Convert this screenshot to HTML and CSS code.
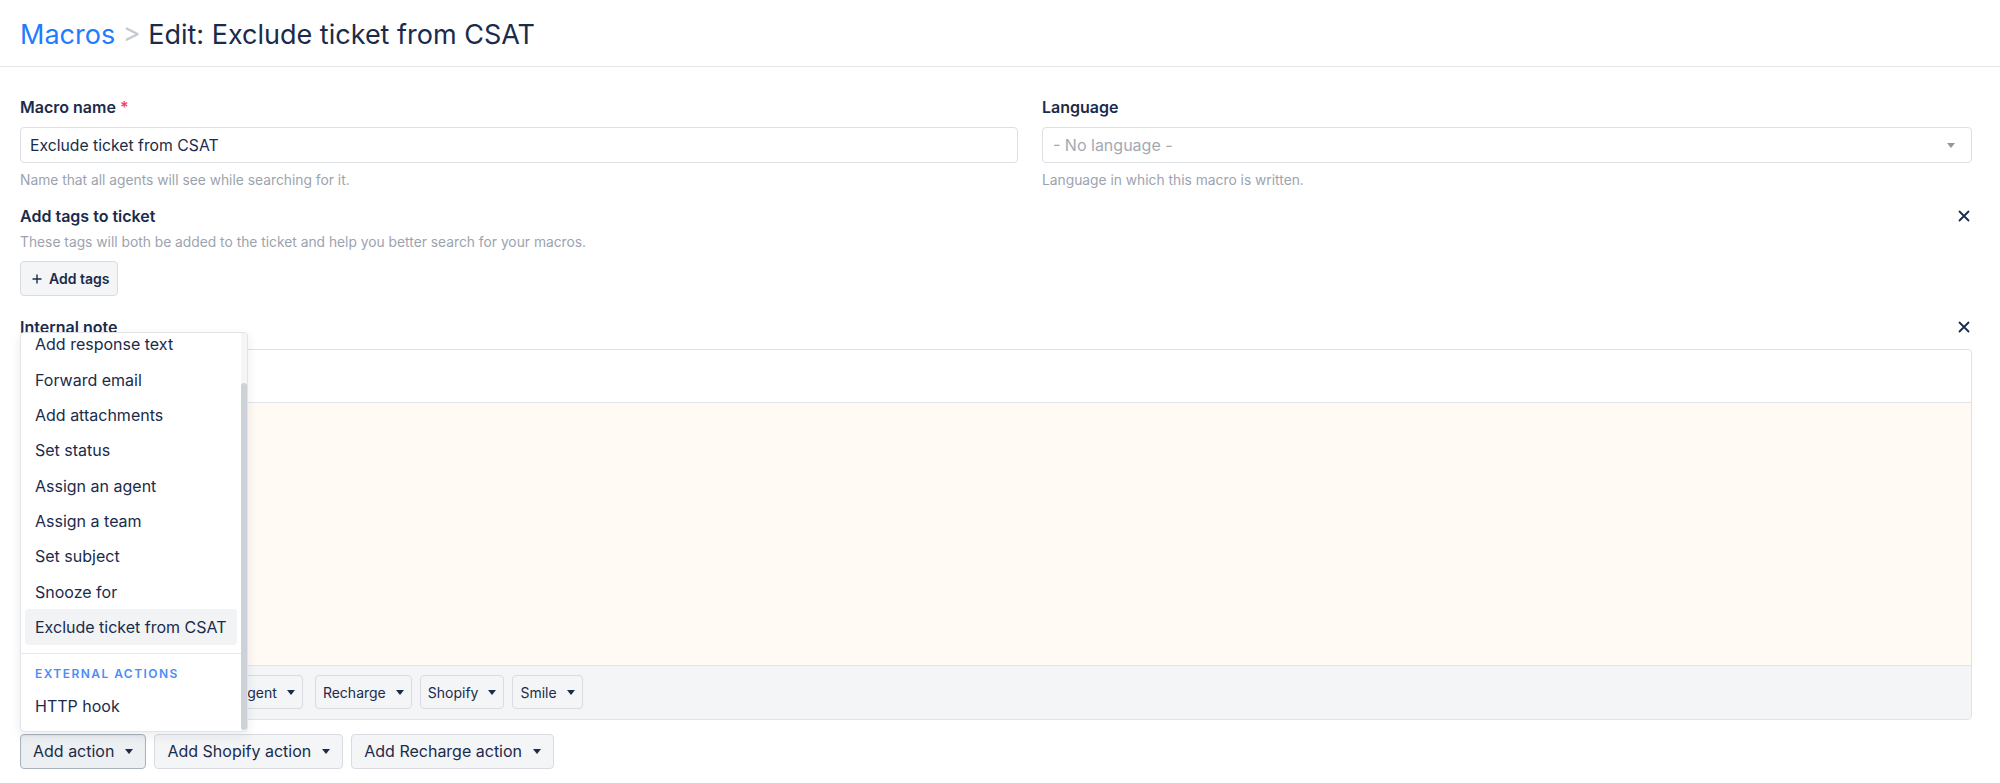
FILE: index.html
```html
<!DOCTYPE html>
<html lang="en">
<head>
    <meta charset="UTF-8">
    <meta name="viewport" content="width=device-width, initial-scale=1.0">
    <title>Edit macro</title>
    <link rel="stylesheet" href="styles.css">
</head>
<body>

<header class="page-header">
    <h1 class="page-title"><a class="crumb-link" href="#">Macros</a> <span class="crumb-sep">&gt;</span> Edit: Exclude ticket from CSAT</h1>
</header>

<main class="page-body">
    <div class="field-row">
        <div class="field">
            <label class="field-label" for="macroName">Macro name <span class="required">*</span></label>
            <input class="text-input" type="text" id="macroName" value="Exclude ticket from CSAT">
            <p class="field-help">Name that all agents will see while searching for it.</p>
        </div>
        <div class="field">
            <label class="field-label">Language</label>
            <div class="select-input">
                <span class="placeholder">- No language -</span>
                <svg class="caret caret-muted" width="8" height="5" viewBox="0 0 8 5"><path d="M0 0h8L4 5z"/></svg>
            </div>
            <p class="field-help">Language in which this macro is written.</p>
        </div>
    </div>

    <!-- tags action -->
    <section class="action-block first">
        <div class="action-head">
            <h3 class="field-label">Add tags to ticket</h3>
            <button class="close-btn" title="Remove">
                <svg width="12" height="12" viewBox="0 0 12 12"><path d="M1.5 1.5l9 9M10.5 1.5l-9 9" stroke="currentColor" stroke-width="1.8" stroke-linecap="round"/></svg>
            </button>
        </div>
        <p class="field-help tight">These tags will both be added to the ticket and help you better search for your macros.</p>
        <button class="btn btn-tags">
            <svg width="10" height="10" viewBox="0 0 10 10"><path d="M5 0.5v9M0.5 5h9" stroke="currentColor" stroke-width="1.4"/></svg>
            Add tags
        </button>
    </section>

    <!-- internal note action -->
    <section class="action-block">
        <div class="action-head">
            <h3 class="field-label">Internal note</h3>
            <button class="close-btn" title="Remove">
                <svg width="12" height="12" viewBox="0 0 12 12"><path d="M1.5 1.5l9 9M10.5 1.5l-9 9" stroke="currentColor" stroke-width="1.8" stroke-linecap="round"/></svg>
            </button>
        </div>
        <div class="editor">
            <div class="editor-top"></div>
            <div class="editor-body"></div>
            <div class="editor-toolbar">
                <button class="btn btn-tool">Customer <svg class="caret" width="8" height="5" viewBox="0 0 8 5"><path d="M0 0h8L4 5z"/></svg></button>
                <button class="btn btn-tool">Current agent <svg class="caret" width="8" height="5" viewBox="0 0 8 5"><path d="M0 0h8L4 5z"/></svg></button>
                <button class="btn btn-tool">Recharge <svg class="caret" width="8" height="5" viewBox="0 0 8 5"><path d="M0 0h8L4 5z"/></svg></button>
                <button class="btn btn-tool">Shopify <svg class="caret" width="8" height="5" viewBox="0 0 8 5"><path d="M0 0h8L4 5z"/></svg></button>
                <button class="btn btn-tool">Smile <svg class="caret" width="8" height="5" viewBox="0 0 8 5"><path d="M0 0h8L4 5z"/></svg></button>
            </div>
        </div>
    </section>

    <div class="action-bar">
        <div class="dropup">
            <div class="dropdown-menu">
                <ul class="menu-list">
                    <li class="menu-item">Add internal note</li>
                    <li class="menu-item">Add response text</li>
                    <li class="menu-item">Forward email</li>
                    <li class="menu-item">Add attachments</li>
                    <li class="menu-item">Set status</li>
                    <li class="menu-item">Assign an agent</li>
                    <li class="menu-item">Assign a team</li>
                    <li class="menu-item">Set subject</li>
                    <li class="menu-item">Snooze for</li>
                    <li class="menu-item is-active">Exclude ticket from CSAT</li>
                    <li class="menu-divider"></li>
                    <li class="menu-header">External actions</li>
                    <li class="menu-item">HTTP hook</li>
                </ul>
                <div class="menu-scroll"><div class="menu-thumb"></div></div>
            </div>
            <button class="btn is-open">Add action <svg class="caret" width="8" height="5" viewBox="0 0 8 5"><path d="M0 0h8L4 5z"/></svg></button>
        </div>
        <button class="btn">Add Shopify action <svg class="caret" width="8" height="5" viewBox="0 0 8 5"><path d="M0 0h8L4 5z"/></svg></button>
        <button class="btn">Add Recharge action <svg class="caret" width="8" height="5" viewBox="0 0 8 5"><path d="M0 0h8L4 5z"/></svg></button>
    </div>
</main>

</body>
</html>
```

FILE: styles.css
```css
* {
    box-sizing: border-box;
}

body {
    margin: 0;
    font-family: Inter, "Noto Sans", sans-serif;
    color: #1b2b4b;
    background-color: #fff;
}

.page-header {
    height: 67px;
    display: flex;
    align-items: center;
    padding: 3px 20px 0;
    border-bottom: 1px solid #e3e5e9;
}

.page-title {
    margin: 0;
    font-size: 27px;
    font-weight: 400;
    line-height: 34px;
}

.crumb-link {
    color: #1f7bff;
    text-decoration: none;
}

.crumb-sep {
    color: #c4c8cf;
}

.page-body {
    padding: 28px 28px 0 20px;
}

.field-row {
    display: grid;
    grid-template-columns: 998fr 930fr;
    column-gap: 24px;
}

.field-label {
    display: block;
    margin: 0 0 8px;
    font-size: 16px;
    font-weight: 600;
    line-height: 24px;
}

.required {
    color: #f2495c;
}

.text-input {
    display: block;
    width: 100%;
    height: 36px;
    padding: 0 9px;
    border: 1px solid #dcdfe4;
    border-radius: 4px;
    font: inherit;
    font-size: 15.75px;
    color: inherit;
}

.select-input {
    display: flex;
    align-items: center;
    justify-content: space-between;
    height: 36px;
    padding: 0 16px 0 10px;
    border: 1px solid #dcdfe4;
    border-radius: 4px;
    font-size: 16px;
}

.placeholder {
    color: #a3a9b4;
}

.field-help {
    margin: 8px 0 0;
    font-size: 13.8px;
    line-height: 18px;
    color: #9ca3ae;
}

.field-help.tight {
    margin-top: 5px;
}

.action-block {
    margin-top: 19px;
}

.action-block.first {
    margin-top: 15px;
}

.action-head {
    display: flex;
    align-items: center;
    justify-content: space-between;
}

.action-head .field-label {
    margin: 0;
}

.close-btn {
    width: 16px;
    height: 16px;
    display: flex;
    align-items: center;
    justify-content: center;
    padding: 0;
    border: none;
    background: none;
    color: #1b2b4b;
    cursor: pointer;
}

.btn {
    display: inline-flex;
    align-items: center;
    gap: 11px;
    height: 35px;
    padding: 0 12px;
    border: 1px solid #d8dce2;
    border-radius: 4px;
    background-color: #f4f5f7;
    font: inherit;
    font-size: 16px;
    color: #1b2b4b;
    white-space: nowrap;
    cursor: pointer;
}

.btn.is-open {
    border-color: #a9b2bf;
    background-color: #edf0f3;
    box-shadow: inset 0 1px 2px rgba(20, 30, 50, 0.06);
}

.caret {
    fill: currentColor;
    flex-shrink: 0;
}

.caret-muted {
    fill: #8f97a4;
}

.btn-tags {
    margin-top: 10px;
    gap: 7px;
    padding: 0 8px 0 11px;
    font-size: 14px;
    font-weight: 600;
}

.editor {
    margin-top: 10px;
    border: 1px solid #dfe2e6;
    border-radius: 4px;
    overflow: hidden;
}

.editor-top {
    height: 53px;
    border-bottom: 1px solid #e2e4e8;
}

.editor-body {
    height: 262.5px;
    background-color: #fffaf4;
    border-bottom: 1px solid #e6e4e0;
}

.editor-toolbar {
    height: 53px;
    display: flex;
    align-items: center;
    gap: 8px;
    padding: 0 10px 0 50px;
    background-color: #f4f5f7;
}

.btn-tool {
    height: 34px;
    gap: 10px;
    padding: 0 7px;
    font-size: 14px;
}

.btn-tool:nth-child(3) {
    margin-left: 4px;
}

.action-bar {
    display: flex;
    gap: 8px;
    margin-top: 14px;
}

.dropup {
    position: relative;
}

.dropdown-menu {
    position: absolute;
    left: 0;
    bottom: calc(100% + 2px);
    z-index: 10;
    width: 228px;
    height: 400px;
    display: flex;
    border: 1px solid #e1e4e8;
    border-radius: 4px;
    background-color: #fff;
    box-shadow: 0 4px 12px rgba(20, 30, 50, 0.08);
    overflow: hidden;
}

.menu-list {
    flex: 1;
    display: flex;
    flex-direction: column;
    justify-content: flex-end;
    margin: 0;
    padding: 4px 4px 7px;
    list-style: none;
    overflow: hidden;
}

.menu-item {
    flex-shrink: 0;
    padding: 5.7px 10px;
    border-radius: 4px;
    font-size: 16px;
    line-height: 24px;
    white-space: nowrap;
}

.menu-item.is-active {
    background-color: #f1f3f5;
}

.menu-divider {
    flex-shrink: 0;
    height: 1px;
    margin: 8px -4px 0;
    background-color: #e6e8ec;
}

.menu-header {
    flex-shrink: 0;
    margin: 12px 0 6.3px;
    padding: 0 10px;
    font-size: 12px;
    font-weight: 600;
    line-height: 16px;
    letter-spacing: 1.45px;
    text-transform: uppercase;
    color: #4b8df8;
}

.menu-scroll {
    width: 6px;
    flex-shrink: 0;
    display: flex;
    flex-direction: column;
    background-color: #f4f5f7;
}

.menu-thumb {
    flex: 1;
    margin: 50px 0 1px;
    border-radius: 3px;
    background-color: #cdd2d9;
}
```
